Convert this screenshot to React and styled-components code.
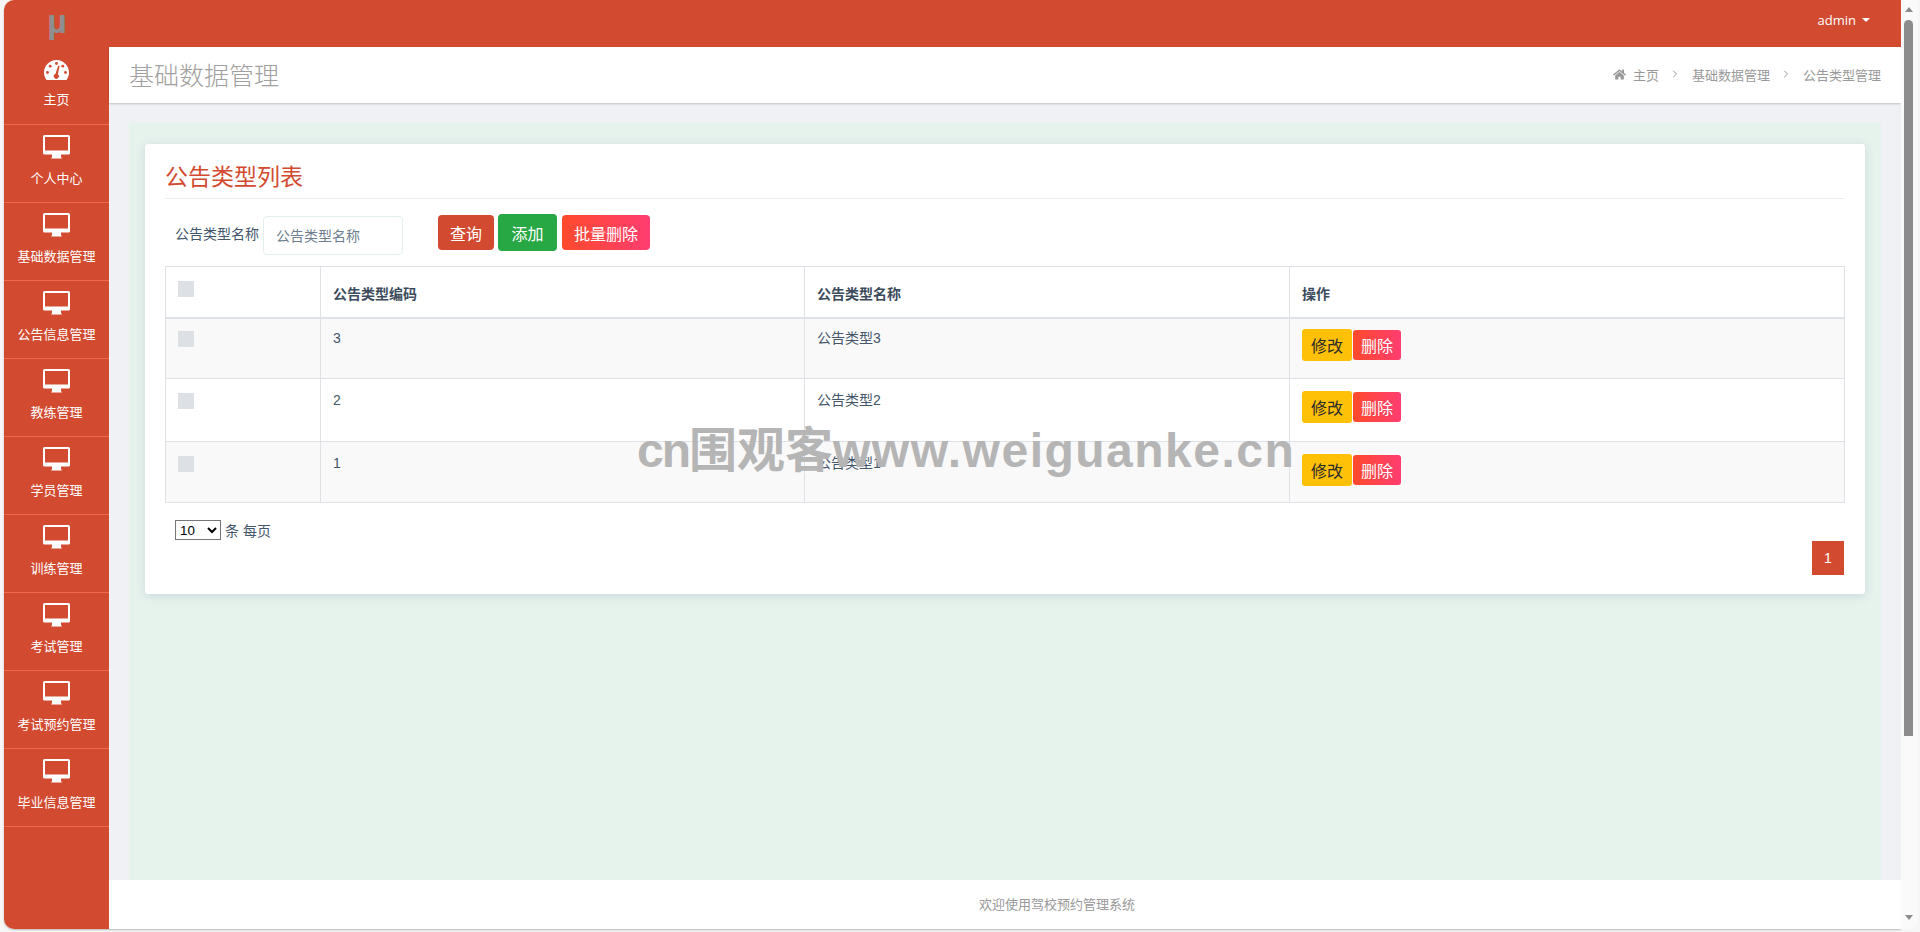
import styled, { createGlobalStyle } from 'styled-components';
import { FaHome } from 'react-icons/fa';
import { ChevronRight } from 'lucide-react';

const GlobalStyle = createGlobalStyle`
  html, body {
    margin: 0;
    height: 100%;
    overflow: hidden;
    background: #f6f6f6;
  }
  body, input, select, button {
    font-family: "Liberation Sans", "Noto Sans CJK SC", sans-serif;
  }
  * { box-sizing: border-box; }
`;

const Page = styled.div`
  position: relative;
  width: 1920px;
  height: 932px;
  display: flex;
  padding: 0 2px 3px 4px;
  background: #f6f6f6;
`;
const Window = styled.div`
  flex: 1;
  display: flex;
  min-width: 0;
  border-radius: 10px 0 0 10px;
  overflow: hidden;
  box-shadow: 0 1px 2px rgba(0, 0, 0, 0.25);
`;

const Sidebar = styled.aside`
  width: 105px;
  flex: none;
  background: #d24a30;
  display: flex;
  flex-direction: column;
`;
const Logo = styled.div`
  height: 47px;
  display: flex;
  justify-content: center;
  padding: 2px 0 0 1px;
  color: #8f8f8f;
  font-size: 34px;
  line-height: 38px;
  font-weight: bold;
`;
const NavItem = styled.a`
  height: 78px;
  padding-top: ${(p) => (p.$first ? '13px' : '10px')};
  display: flex;
  flex-direction: column;
  align-items: center;
  border-bottom: 1px solid #f0694e;
  color: #fff;
  font-size: 13px;
  line-height: 20px;
  text-decoration: none;
`;
const NavLabel = styled.span`
  margin-top: 10px;
`;

const Main = styled.div`
  flex: 1;
  min-width: 0;
  display: flex;
  flex-direction: column;
`;
const TopBar = styled.header`
  height: 47px;
  flex: none;
  background: #d24a30;
  display: flex;
  align-items: center;
  justify-content: flex-end;
  padding: 0 31px 8px 0;
  color: #fff;
  font-family: "Open Sans", sans-serif;
  font-size: 13px;
`;
const Caret = styled.i`
  margin-left: 6px;
  border-top: 4px solid #fff;
  border-left: 4px solid transparent;
  border-right: 4px solid transparent;
`;
const PageHeader = styled.div`
  position: relative;
  height: 56px;
  flex: none;
  background: #fff;
  display: flex;
  align-items: center;
  justify-content: space-between;
  padding: 0 20px 2px;
  box-shadow: 0 1px 2px rgba(0, 0, 0, 0.2);
`;
const PageTitle = styled.h1`
  margin: 0;
  font-size: 25px;
  font-weight: 300;
  color: #a0a0a0;
`;
const Crumbs = styled.nav`
  display: flex;
  align-items: center;
  font-size: 13px;
  color: #999;
`;
const Crumb = styled.span`
  display: inline-flex;
  align-items: center;
  gap: 7px;
`;
const CrumbSep = styled.span`
  display: inline-flex;
  width: 33px;
  justify-content: center;
  color: #999;
`;

const Content = styled.main`
  flex: 1;
  min-height: 0;
  background: #eff1f5;
  padding: 20px 20px 0;
`;
const Panel = styled.div`
  height: 100%;
  background: #e6f2ec;
  padding: 21px 16px 0;
`;
const Card = styled.section`
  height: 450px;
  background: #fff;
  border-radius: 3px;
  padding: 18px 20px 0;
  box-shadow: 0 2px 10px rgba(90, 120, 170, 0.2);
`;
const CardTitle = styled.h2`
  margin: 0;
  height: 37px;
  border-bottom: 1px solid #eceef0;
  font-size: 23px;
  line-height: 30px;
  font-weight: 400;
  color: #d24a30;
`;
const SearchRow = styled.div`
  display: flex;
  align-items: flex-start;
  height: 67px;
  padding: 17px 0 0 10px;
`;
const SearchLabel = styled.label`
  font-size: 14px;
  line-height: 20px;
  color: #44566c;
  margin-top: 8px;
`;
const SearchInput = styled.input`
  width: 140px;
  height: 39px;
  margin-left: 4px;
  padding: 0 12px;
  border: 1px solid #e4eeee;
  border-radius: 4px;
  font-size: 14px;
  outline: none;
  &::placeholder { color: #6e7e8e; }
`;
const SearchBtn = styled.button`
  height: ${(p) => (p.$green ? '37px' : '35px')};
  margin: ${(p) => (p.$green ? '-2px' : '-1px')} 0 0 ${(p) => p.$ml || '4px'};
  padding: 0 ${(p) => (p.$green ? '13.5px' : '12px')};
  border: 0;
  border-radius: 4px;
  color: #fff;
  font-size: 16px;
  background: ${(p) => p.$bg};
`;

const Table = styled.table`
  width: 1680px;
  table-layout: fixed;
  border-collapse: collapse;
  font-size: 14px;
  color: #44566c;
`;
const Th = styled.th`
  width: ${(p) => p.$w};
  height: 51px;
  padding: 14px 12px 0;
  text-align: left;
  vertical-align: top;
  border: 1px solid #dee2e6;
  border-bottom-width: 2px;
  font-weight: bold;
  line-height: 26px;
  color: #3c4b5c;
`;
const Tr = styled.tr`
  height: ${(p) => p.$h}px;
  background: ${(p) => (p.$odd ? '#f9f9f9' : '#fff')};
`;
const Td = styled.td`
  padding: 11px 12px 0;
  vertical-align: top;
  border: 1px solid #dee2e6;
  line-height: 20px;
  tr:first-child > & {
    padding-top: 9px;
  }
`;
const Check = styled.span`
  display: block;
  width: 16px;
  height: 16px;
  margin-top: ${(p) => (p.$head ? '0' : '3px')};
  background: #dde1e6;
`;
const Actions = styled.div`
  display: flex;
  align-items: center;
  gap: 1px;
  margin-top: 1px;
`;
const RowBtn = styled.button`
  width: ${(p) => (p.$edit ? '50px' : '48px')};
  height: ${(p) => (p.$edit ? '32px' : '30px')};
  padding: 0;
  border: 0;
  border-radius: 3px;
  font-size: 16px;
  color: ${(p) => (p.$edit ? '#2b2b2b' : '#fff')};
  background: ${(p) => (p.$edit ? '#ffc107' : 'linear-gradient(to right, #ff4a2b, #ff3d71)')};
`;

const TableFoot = styled.div`
  display: flex;
  justify-content: space-between;
  padding: 17px 0 0 10px;
`;
const PageSize = styled.div`
  display: flex;
  align-items: center;
  gap: 4px;
  height: 20px;
  font-size: 14px;
  color: #44566c;
`;
const SizeSelect = styled.select`
  width: 46px;
  height: 20px;
  font-size: 13.33px;
  background: #fff;
`;
const PageNum = styled.span`
  width: 32px;
  height: 34px;
  margin: 21px 1px 0 0;
  display: flex;
  align-items: center;
  justify-content: center;
  background: #d24a30;
  color: #fff;
  font-size: 14px;
`;

const Footer = styled.footer`
  height: 49px;
  flex: none;
  background: #fff;
  display: flex;
  align-items: center;
  justify-content: center;
  padding: 0 0 2px 104px;
  font-size: 13px;
  color: #999;
`;

const Scrollbar = styled.div`
  width: 17px;
  flex: none;
  display: flex;
  flex-direction: column;
  align-items: center;
  padding: 7px 5px 9px 3px;
  border-radius: 0 0 8px 0;
  background: #fafafa;
`;
const ArrowUp = styled.i`
  flex: none;
  border-bottom: 5px solid #8c8c8c;
  border-left: 4.5px solid transparent;
  border-right: 4.5px solid transparent;
`;
const ArrowDown = styled.i`
  flex: none;
  border-top: 5px solid #8c8c8c;
  border-left: 4.5px solid transparent;
  border-right: 4.5px solid transparent;
`;
const Thumb = styled.div`
  width: 9px;
  height: 716px;
  margin: 8px 0 auto;
  border-radius: 5px 5px 0 0;
  background: #8c8c8c;
`;

const Watermark = styled.div`
  position: absolute;
  left: 637px;
  top: 415px;
  white-space: nowrap;
  font-family: "Noto Sans CJK SC", sans-serif;
  font-size: 48px;
  line-height: 62px;
  font-weight: 700;
  color: #b5b5b5;
`;
const WatermarkLatin = styled.span`
  font-family: "Liberation Sans", sans-serif;
  letter-spacing: ${(p) => p.$spacing};
`;

const DeskIcon = () => (
  <svg width="27" height="24" viewBox="0 0 27 24">
    <path
      fill="#fff"
      fillRule="evenodd"
      d="M1.5 0h24A1.5 1.5 0 0 1 27 1.5v16.5a1.5 1.5 0 0 1-1.500 1.500H18v2.500l1 1.500H8l1-1.500v-2.500H1.500A1.500 1.500 0 0 1 0 18V1.500A1.500 1.500 0 0 1 1.500 0zM2 2v13.500h23V2z"
    />
  </svg>
);

const GaugeIcon = () => (
  <svg width="25" height="20" viewBox="0 0 25 20">
    <path
      fill="#fff"
      d="M12.500 0C5.600 0 0 5.600 0 12.500c0 2.700.85 5.200 2.300 7.200.3.2.6.3 1 .3h18.400c.4 0 .7-.1 1-.3 1.450-2 2.300-4.500 2.300-7.200C25 5.600 19.400 0 12.500 0z"
    />
    <g fill="#d24a30">
      <circle cx="3.500" cy="12.500" r="1.400" />
      <circle cx="6.200" cy="6.200" r="1.400" />
      <circle cx="12.500" cy="3.500" r="1.400" />
      <circle cx="18.800" cy="6.200" r="1.400" />
      <circle cx="21.500" cy="12.500" r="1.400" />
      <path d="M14.300 5.500l1.300.4-1.700 8.400a2.500 2.500 0 1 1-2.500-.4z" />
    </g>
  </svg>
);

const navItems = ['个人中心', '基础数据管理', '公告信息管理', '教练管理', '学员管理', '训练管理', '考试管理', '考试预约管理', '毕业信息管理'];
const rows = [
  { code: '3', name: '公告类型3', height: 61 },
  { code: '2', name: '公告类型2', height: 63 },
  { code: '1', name: '公告类型1', height: 61 },
];

export default function App() {
  return (
    <Page>
      <GlobalStyle />
      <Window>
        <Sidebar>
          <Logo>µ</Logo>
          <NavItem $first>
            <GaugeIcon />
            <NavLabel>主页</NavLabel>
          </NavItem>
          {navItems.map((name) => (
            <NavItem key={name}>
              <DeskIcon />
              <NavLabel>{name}</NavLabel>
            </NavItem>
          ))}
        </Sidebar>
        <Main>
          <TopBar>
            admin
            <Caret />
          </TopBar>
          <PageHeader>
            <PageTitle>基础数据管理</PageTitle>
            <Crumbs>
              <Crumb>
                <FaHome size={13} />
                主页
              </Crumb>
              <CrumbSep><ChevronRight size={12} strokeWidth={2} /></CrumbSep>
              <Crumb>基础数据管理</Crumb>
              <CrumbSep><ChevronRight size={12} strokeWidth={2} /></CrumbSep>
              <Crumb>公告类型管理</Crumb>
            </Crumbs>
          </PageHeader>
          <Content>
            <Panel>
              <Card>
                <CardTitle>公告类型列表</CardTitle>
                <SearchRow>
                  <SearchLabel>公告类型名称</SearchLabel>
                  <SearchInput placeholder="公告类型名称" />
                  <SearchBtn $ml="35px" $bg="#d24a30">查询</SearchBtn>
                  <SearchBtn $green $bg="#28a745">添加</SearchBtn>
                  <SearchBtn $ml="5px" $bg="linear-gradient(to right, #ff4a2b, #ff3d71)">批量删除</SearchBtn>
                </SearchRow>
                <Table>
                  <thead>
                    <tr>
                      <Th $w="155px"><Check $head /></Th>
                      <Th $w="484px">公告类型编码</Th>
                      <Th $w="485px">公告类型名称</Th>
                      <Th>操作</Th>
                    </tr>
                  </thead>
                  <tbody>
                    {rows.map((row, i) => (
                      <Tr key={row.code} $h={row.height} $odd={i % 2 === 0}>
                        <Td><Check /></Td>
                        <Td>{row.code}</Td>
                        <Td>{row.name}</Td>
                        <Td>
                          <Actions>
                            <RowBtn $edit>修改</RowBtn>
                            <RowBtn>删除</RowBtn>
                          </Actions>
                        </Td>
                      </Tr>
                    ))}
                  </tbody>
                </Table>
                <TableFoot>
                  <PageSize>
                    <SizeSelect defaultValue="10">
                      <option value="10">10</option>
                      <option value="20">20</option>
                    </SizeSelect>
                    条 每页
                  </PageSize>
                  <PageNum>1</PageNum>
                </TableFoot>
              </Card>
            </Panel>
          </Content>
          <Footer>欢迎使用驾校预约管理系统</Footer>
        </Main>
      </Window>
      <Scrollbar>
        <ArrowUp />
        <Thumb />
        <ArrowDown />
      </Scrollbar>
      <Watermark>
        <WatermarkLatin $spacing="-2px">cn</WatermarkLatin>围观客<WatermarkLatin $spacing="1.5px">www.weiguanke.cn</WatermarkLatin>
      </Watermark>
    </Page>
  );
}
